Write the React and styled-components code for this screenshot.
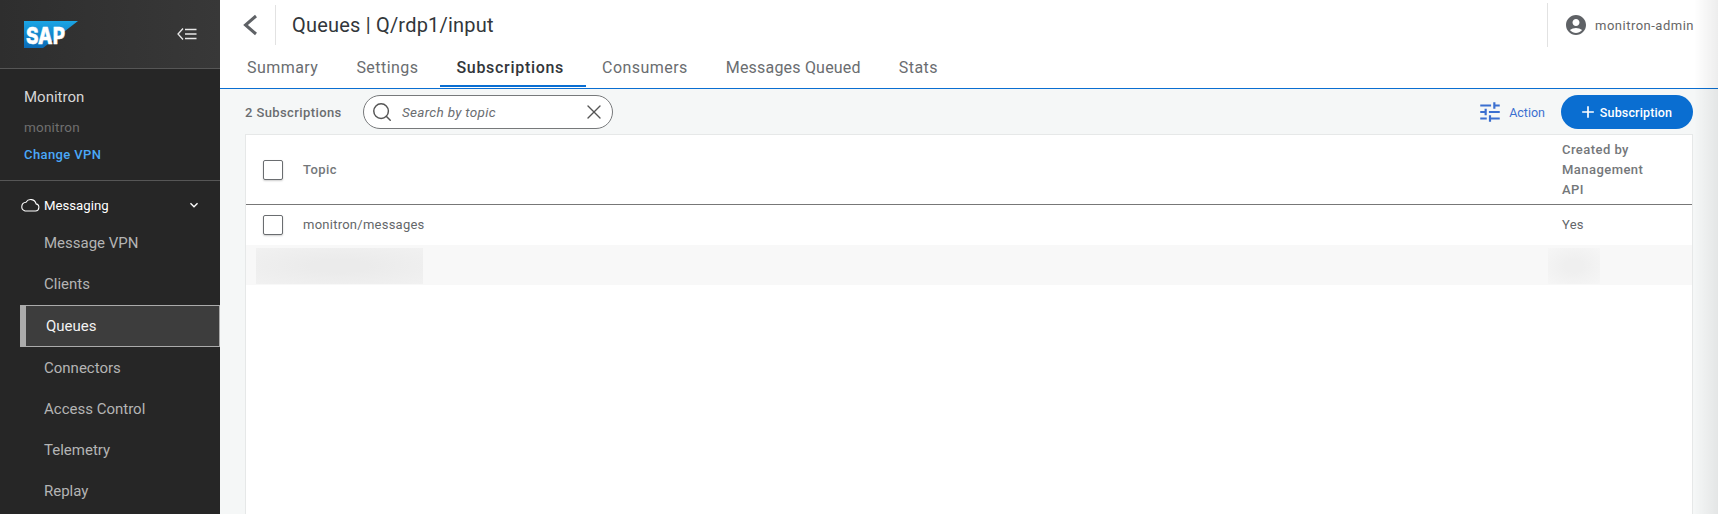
import React from "react";
import styled, { createGlobalStyle } from "styled-components";
import { MdAccountCircle, MdTune, MdAdd, MdKeyboardArrowDown } from "react-icons/md";
import { Search, X } from "lucide-react";

const GlobalStyle = createGlobalStyle`
  html, body {
    margin: 0;
    padding: 0;
    height: 100%;
    overflow: hidden;
    font-family: Roboto, "Liberation Sans", sans-serif;
  }
  * { box-sizing: border-box; }
`;

const Page = styled.div`
  position: relative;
  display: flex;
  width: 1718px;
  height: 514px;
  overflow: hidden;
  background: #fff;
`;

// soft shadow that falls over the right edge of the page
const EdgeShade = styled.div`
  position: absolute;
  top: 0;
  right: 0;
  bottom: 0;
  width: 24px;
  pointer-events: none;
  background: linear-gradient(90deg, rgba(0, 0, 0, 0), rgba(0, 0, 0, 0.07));
`;

const Sidebar = styled.aside`
  width: 220px;
  flex: none;
  display: flex;
  flex-direction: column;
  background: #262626;
`;

const LogoBar = styled.div`
  height: 69px;
  flex: none;
  display: flex;
  align-items: center;
  justify-content: space-between;
  padding: 0 23px 0 24px;
  background: linear-gradient(90deg, #2e2e2e, #383838);
  border-bottom: 1px solid #565656;
`;

const VpnBlock = styled.div`
  height: 112px;
  flex: none;
  padding: 18px 24px 0;
  border-bottom: 1px solid #565656;
`;

const VpnName = styled.div`
  font-size: 15px;
  line-height: 20px;
  color: #d6d6d6;
`;

const VpnSub = styled.div`
  margin-top: 10px;
  font-size: 13.5px;
  line-height: 20px;
  letter-spacing: 0.2px;
  color: #6f6f6f;
`;

const ChangeVpn = styled.div`
  margin-top: 8px;
  font-size: 13px;
  line-height: 20px;
  font-weight: 500;
  letter-spacing: 0.4px;
  color: #4aa8f8;
`;

const Nav = styled.nav`
  display: flex;
  flex-direction: column;
  padding-left: 20px;
`;

const NavHead = styled.div`
  height: 41px;
  padding: 7px 18px 0 0;
  display: flex;
  align-items: center;
  gap: 4px;
  font-size: 13.2px;
  color: #fff;
  span { flex: 1; }
`;

const NavItem = styled.div`
  height: ${(p) => (p.$active ? "42px" : "41px")};
  margin-top: ${(p) => (p.$active ? "1px" : "0")};
  display: flex;
  align-items: center;
  font-size: 15px;
  color: ${(p) => (p.$active ? "#f2f2f2" : "#b4b4b4")};
  padding-left: ${(p) => (p.$active ? "20px" : "24px")};
  background: ${(p) => (p.$active ? "#3d3d3d" : "transparent")};
  border: ${(p) => (p.$active ? "1px solid #ababab" : "none")};
  border-left: ${(p) => (p.$active ? "6px solid #ababab" : "none")};
`;

const Main = styled.main`
  flex: 1;
  min-width: 0;
  display: flex;
  flex-direction: column;
`;

const TopBar = styled.header`
  height: 50px;
  flex: none;
  display: flex;
  align-items: center;
`;

const BackButton = styled.div`
  width: 56px;
  height: 40px;
  flex: none;
  display: flex;
  align-items: center;
  justify-content: center;
  padding-left: 4px;
  border-right: 1px solid #e2e2e2;
`;

const Title = styled.h1`
  flex: 1;
  margin: 0;
  padding-left: 16px;
  font-size: 20px;
  font-weight: 400;
  letter-spacing: 0.2px;
  color: #32363a;
`;

const UserBox = styled.div`
  width: 171px;
  height: 44px;
  display: flex;
  align-items: center;
  gap: 7px;
  padding-left: 16px;
  border-left: 1px solid #e2e2e2;
  font-size: 13px;
  letter-spacing: 0.5px;
  color: #666;
`;

const Tabs = styled.div`
  height: 39px;
  flex: none;
  display: flex;
  padding-left: 11px;
  border-bottom: 1px solid #0a6ed1;
`;

const Tab = styled.div`
  height: 37px;
  padding: 0 22px 1px 16px;
  display: flex;
  align-items: center;
  font-size: 16px;
  font-weight: ${(p) => (p.$active ? 500 : 400)};
  letter-spacing: ${(p) => p.$spacing || "0.45px"};
  color: ${(p) => (p.$active ? "#32363a" : "#6a6d70")};
  border-bottom: ${(p) => (p.$active ? "2px solid #0a6ed1" : "2px solid transparent")};
`;

const Content = styled.div`
  flex: 1;
  display: flex;
  flex-direction: column;
  padding: 0 25px;
  background: #f5f7f7;
`;

const Toolbar = styled.div`
  height: 45px;
  flex: none;
  display: flex;
  align-items: center;
  padding-top: 1px;
`;

const CountLabel = styled.div`
  width: 118px;
  font-size: 13px;
  font-weight: 500;
  letter-spacing: 0.4px;
  color: #6a6d70;
`;

const SearchBox = styled.div`
  width: 250px;
  height: 34px;
  display: flex;
  align-items: center;
  padding: 0 6px 0 7px;
  background: #fff;
  border: 1px solid #77797b;
  border-radius: 17px;
  color: #555;
`;

const SearchText = styled.span`
  flex: 1;
  margin-left: 9px;
  font-size: 13.5px;
  font-style: italic;
  letter-spacing: 0.3px;
  color: #6a6d70;
`;

const Spacer = styled.div`
  flex: 1;
`;

const ActionLink = styled.div`
  display: flex;
  align-items: center;
  gap: 6px;
  margin-right: 16px;
  font-size: 12.5px;
  color: #3b6fd0;
`;

const AddButton = styled.div`
  width: 132px;
  height: 34px;
  display: flex;
  align-items: center;
  justify-content: center;
  gap: 2px;
  padding-right: 4px;
  border-radius: 17px;
  background: #0a6ed1;
  color: #fff;
  font-size: 12.5px;
  font-weight: 500;
  letter-spacing: 0.15px;
`;

const Card = styled.div`
  flex: 1;
  background: #fff;
  border: 1px solid #e6e8e8;
  border-bottom: none;
`;

const Row = styled.div`
  display: grid;
  grid-template-columns: 1fr 130px;
  align-items: center;
  height: ${(p) => p.$height}px;
  padding-bottom: ${(p) => p.$nudge || 0}px;
  background: ${(p) => p.$bg || "#fff"};
  border-bottom: ${(p) => (p.$line ? "1px solid #777" : "none")};
`;

const TopicCell = styled.div`
  display: flex;
  align-items: center;
  padding-left: 17px;
`;

const Check = styled.div`
  width: 20px;
  height: 20px;
  flex: none;
  margin-right: 20px;
  background: #fff;
  border: 1px solid #6a6d70;
  border-radius: 2px;
  box-shadow: 0 1px 2px rgba(0, 0, 0, 0.2);
`;

const HeadText = styled.div`
  font-size: 13px;
  line-height: 20px;
  font-weight: 500;
  letter-spacing: 0.45px;
  color: #74777a;
`;

const CellText = styled.div`
  font-size: 13px;
  letter-spacing: 0.25px;
  color: #64676a;
`;

const BlurBlock = styled.div`
  height: 36px;
  width: ${(p) => p.$width}px;
  margin-left: ${(p) => p.$left}px;
  margin-top: 2px;
  background: radial-gradient(ellipse at center, ${(p) => p.$core} 25%, ${(p) => p.$edge} 100%);
`;

const SapLogo = () => (
  <svg width="54" height="27" viewBox="0 0 54 27" overflow="visible">
    <defs>
      <linearGradient id="sapGrad" x1="0" y1="0" x2="0" y2="1">
        <stop offset="0" stopColor="#1ba5e5" />
        <stop offset="1" stopColor="#0a6ab5" />
      </linearGradient>
    </defs>
    <polygon points="0,0 54,0 19,27 0,27" fill="url(#sapGrad)" />
    <text x="2" y="23" fontFamily="Inter" fontWeight="800" fontSize="23" fill="#fff" stroke="#fff" strokeWidth="0.5" textLength="39" lengthAdjust="spacingAndGlyphs">SAP</text>
  </svg>
);

const CollapseIcon = () => (
  <svg width="20" height="14" viewBox="0 0 20 14" fill="none" stroke="#e8e8e8" strokeWidth="1.3">
    <path d="M6 1.5 1 7l5 5.5" />
    <path d="M8 2.5h11.5M8 7h11.5M8 11.5h11.5" />
  </svg>
);

const CloudIcon = () => (
  <svg width="20" height="14" viewBox="0 0 20 14" fill="none" stroke="#fff" strokeWidth="1.1">
    <path d="M5 13h10.5a3.6 3.6 0 0 0 .6-7.1A5.5 5.5 0 0 0 6 4.2 4.5 4.5 0 0 0 5 13Z" />
  </svg>
);

const BackIcon = () => (
  <svg width="16" height="22" viewBox="0 0 16 22" fill="none" stroke="#5f6266" strokeWidth="3">
    <path d="M14 2 3.5 11 14 20" />
  </svg>
);

const navItems = ["Message VPN", "Clients", "Queues", "Connectors", "Access Control", "Telemetry", "Replay"];
const tabs = [
  { label: "Summary" },
  { label: "Settings" },
  { label: "Subscriptions", active: true, spacing: "0.7px" },
  { label: "Consumers" },
  { label: "Messages Queued", spacing: "0.2px" },
  { label: "Stats" },
];

export default function App() {
  return (
    <Page>
      <GlobalStyle />
      <Sidebar>
        <LogoBar>
          <SapLogo />
          <CollapseIcon />
        </LogoBar>
        <VpnBlock>
          <VpnName>Monitron</VpnName>
          <VpnSub>monitron</VpnSub>
          <ChangeVpn>Change VPN</ChangeVpn>
        </VpnBlock>
        <Nav>
          <NavHead>
            <CloudIcon />
            <span>Messaging</span>
            <MdKeyboardArrowDown size={16} />
          </NavHead>
          {navItems.map((item) => (
            <NavItem key={item} $active={item === "Queues"}>{item}</NavItem>
          ))}
        </Nav>
      </Sidebar>
      <Main>
        <TopBar>
          <BackButton><BackIcon /></BackButton>
          <Title>Queues | Q/rdp1/input</Title>
          <UserBox>
            <MdAccountCircle size={24} color="#5f6266" />
            monitron-admin
          </UserBox>
        </TopBar>
        <Tabs>
          {tabs.map((tab) => (
            <Tab key={tab.label} $active={tab.active} $spacing={tab.spacing}>{tab.label}</Tab>
          ))}
        </Tabs>
        <Content>
          <Toolbar>
            <CountLabel>2 Subscriptions</CountLabel>
            <SearchBox>
              <Search size={22} strokeWidth={1.6} />
              <SearchText>Search by topic</SearchText>
              <X size={24} strokeWidth={1.4} />
            </SearchBox>
            <Spacer />
            <ActionLink>
              <MdTune size={26} color="#3b6fd0" />
              Action
            </ActionLink>
            <AddButton>
              <MdAdd size={20} />
              Subscription
            </AddButton>
          </Toolbar>
          <Card>
            <Row $height={70} $line>
              <TopicCell>
                <Check />
                <HeadText>Topic</HeadText>
              </TopicCell>
              <HeadText>Created by<br />Management<br />API</HeadText>
            </Row>
            <Row $height={40} $nudge={1}>
              <TopicCell>
                <Check />
                <CellText>monitron/messages</CellText>
              </TopicCell>
              <CellText>Yes</CellText>
            </Row>
            <Row $height={40} $bg="#f8f8f8">
              <BlurBlock $width={167} $left={10} $core="#ebebeb" $edge="#f1f1f1" />
              <BlurBlock $width={52} $left={-14} $core="#efefef" $edge="#f6f6f6" />
            </Row>
          </Card>
        </Content>
      </Main>
      <EdgeShade />
    </Page>
  );
}
